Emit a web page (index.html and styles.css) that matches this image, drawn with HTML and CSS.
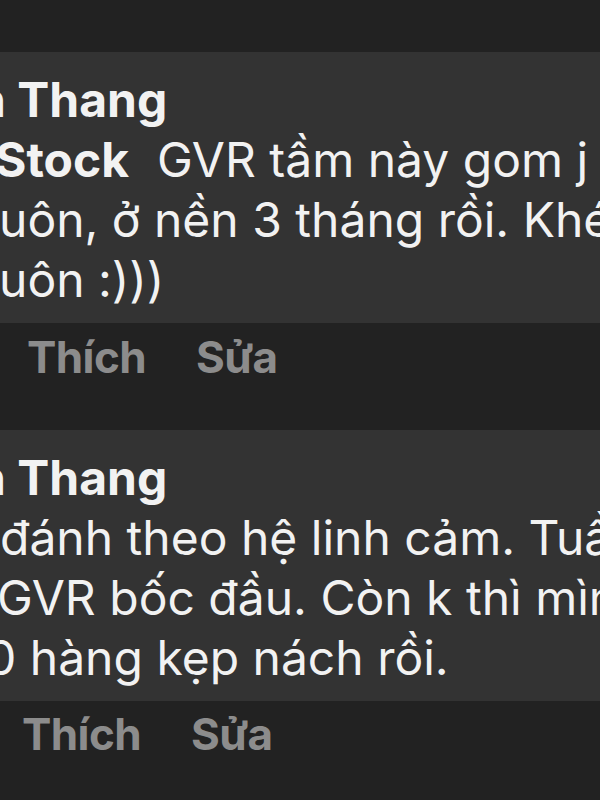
FILE: index.html
```html
<!DOCTYPE html>
<html lang="vi">
<head>
    <meta charset="UTF-8">
    <meta name="viewport" content="width=device-width, initial-scale=1.0">
    <title>Bình luận</title>
    <link rel="stylesheet" href="styles.css">
</head>
<body>
    <div class="thread">
        <div class="comment">
            <div class="bubble">
                <div class="line name cut-name">n Thang</div>
                <div class="line cut-5"><span class="tag">Stock</span>GVR tầm này gom j</div>
                <div class="line cut-1">uôn, ở nền 3 tháng rồi. Khé</div>
                <div class="line cut-1">uôn :)))</div>
            </div>
            <div class="actions">
                <span>Thích</span>
                <span>Sửa</span>
            </div>
        </div>

        <div class="comment second">
            <div class="bubble">
                <div class="line name cut-name">n Thang</div>
                <div class="line cut-0">đánh theo hệ linh cảm. Tuầ</div>
                <div class="line cut-3">GVR bốc đầu. Còn k thì mìn</div>
                <div class="line cut-14">0 hàng kẹp nách rồi.</div>
            </div>
            <div class="actions">
                <span>Thích</span>
                <span>Sửa</span>
            </div>
        </div>
    </div>
</body>
</html>
```

FILE: styles.css
```css
body {
    margin: 0;
    background-color: #222222;
    color: #f2f2f2;
    font-family: Inter, "Noto Sans", sans-serif;
    overflow: hidden;
}
.thread {
    padding-top: 52px;
    width: 600px;
}
.bubble {
    background: #333333;
    padding: 18px 0 13px;
    font-size: 48px;
    line-height: 60px;
}
.line {
    white-space: nowrap;
}
.name { font-weight: 700; }
.tag {
    font-weight: 700;
    margin-right: 28px;
}
.cut-name { margin-left: -24px; }
.cut-0 { margin-left: 0; }
.cut-1 { margin-left: -1px; }
.cut-3 { margin-left: -3px; }
.cut-5 { margin-left: -5px; }
.cut-14 { margin-left: -14px; }
.actions {
    height: 107px;
    display: flex;
    gap: 50px;
    padding: 12px 0 0 27px;
    font-size: 44px;
    font-weight: 700;
    letter-spacing: -0.6px;
    line-height: 1;
    color: #8c8c8c;
    box-sizing: border-box;
}
.second .actions { padding: 11px 0 0 22px; }
```
